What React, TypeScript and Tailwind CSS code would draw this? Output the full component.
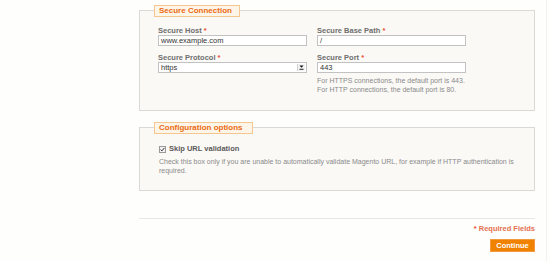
import React from "react";

const Req = () => <span className="text-[#eb4a2a]"> *</span>;

function Field({ label, children }: { label: string; children: React.ReactNode }) {
  return (
    <div className="flex flex-col">
      <div className="h-[9px] leading-[9px] text-[7.5px] font-bold text-[#6e6e6e] whitespace-nowrap">
        {label}
        <Req />
      </div>
      {children}
    </div>
  );
}

function TextInput({ value }: { value: string }) {
  return (
    <div className="h-[11px] border border-[#c2c2c2] bg-white px-[2px] text-[7.5px] leading-[9px] text-[#333]">
      {value}
    </div>
  );
}

function Legend({ children, w }: { children: React.ReactNode; w: string }) {
  return (
    <div
      className={`absolute left-[14px] top-[-6px] h-[12px] ${w} border border-[#f5c690] bg-[#fdf5e8] pl-[4px] text-[8px] font-bold leading-[10px] text-[#ec6a12] whitespace-nowrap`}
    >
      {children}
    </div>
  );
}

export default function App() {
  return (
    <div
      className="relative h-[261px] w-[550px] overflow-hidden bg-[#fefefd]"
      style={{ fontFamily: '"Liberation Sans", Arial, sans-serif' }}
    >
      <div className="absolute right-[3px] top-0 h-full w-px bg-[#f2f2f0]" />
      <div className="ml-[139px] w-[396px] pt-[10px]">
        {/* Secure Connection */}
        <div className="relative h-[101px] border border-[#dad9d5] bg-[#faf9f6]">
          <Legend w="w-[86px]">Secure Connection</Legend>
          <div className="grid grid-cols-[149px_149px] gap-x-[10px] pl-[18px] pt-[15px]">
            <div className="flex flex-col gap-[7px]">
              <Field label="Secure Host">
                <TextInput value="www.example.com" />
              </Field>
              <Field label="Secure Protocol">
                <div className="relative flex h-[11px] items-center border border-[#c2c2c2] bg-white px-[2px] text-[7.5px] leading-[9px] text-[#333]">
                  https
                  <div className="absolute right-[1px] top-[1px] flex h-[7px] w-[8px] items-center justify-center border-l border-[#d0d0d0] bg-[#f3f3f3]">
                    <svg width="5" height="5" viewBox="0 0 5 5">
                      <path d="M0.5 0.6 L4.5 0.6 L2.5 2.8 Z" fill="#111" />
                      <rect x="0.5" y="3.8" width="4" height="0.9" fill="#111" />
                    </svg>
                  </div>
                </div>
              </Field>
            </div>
            <div className="flex flex-col gap-[7px]">
              <Field label="Secure Base Path">
                <TextInput value="/" />
              </Field>
              <Field label="Secure Port">
                <TextInput value="443" />
                <div className="mt-[4px] text-[7px] leading-[8.5px] text-[#8a8a8a]">
                  <div className="whitespace-nowrap">For HTTPS connections, the default port is 443.</div>
                  <div className="whitespace-nowrap">For HTTP connections, the default port is 80.</div>
                </div>
              </Field>
            </div>
          </div>
        </div>

        {/* Configuration options */}
        <div className="relative mt-[16px] h-[64px] border border-[#dad9d5] bg-[#faf9f6]">
          <Legend w="w-[99px]">Configuration options</Legend>
          <div className="pl-[19px] pr-[20px] pt-[17px]">
            <div className="flex h-[8px] items-center gap-[3px]">
              <div className="flex h-[7px] w-[7px] items-center justify-center border border-[#9a9a9a] bg-[#f2f2f2]">
                <svg width="5" height="5" viewBox="0 0 5 5">
                  <path d="M0.6 2.6 L1.9 3.9 L4.4 0.9" stroke="#333" strokeWidth="1" fill="none" />
                </svg>
              </div>
              <span className="text-[7.5px] font-bold leading-[8px] text-[#5a5a5a]">Skip URL validation</span>
            </div>
            <div className="mt-[4px] text-[7px] leading-[9px] text-[#8a8a8a]">
              Check this box only if you are unable to automatically validate Magento URL, for example if HTTP authentication is required.
            </div>
          </div>
        </div>

        <div className="mt-[27px] h-px bg-[#e8e8e5]" />
        <div className="mt-[5px] flex justify-end text-[7.5px] font-bold leading-[9px] text-[#e4704f]">
          <span>
            <span className="text-[#eb4a2a]">* </span>Required Fields
          </span>
        </div>
        <div className="mt-[6px] flex justify-end">
          <div className="flex h-[13px] w-[45px] items-center justify-center border border-[#f29a3f] bg-[#f18200] text-[7.5px] font-bold leading-[9px] text-white">
            Continue
          </div>
        </div>
      </div>
    </div>
  );
}
